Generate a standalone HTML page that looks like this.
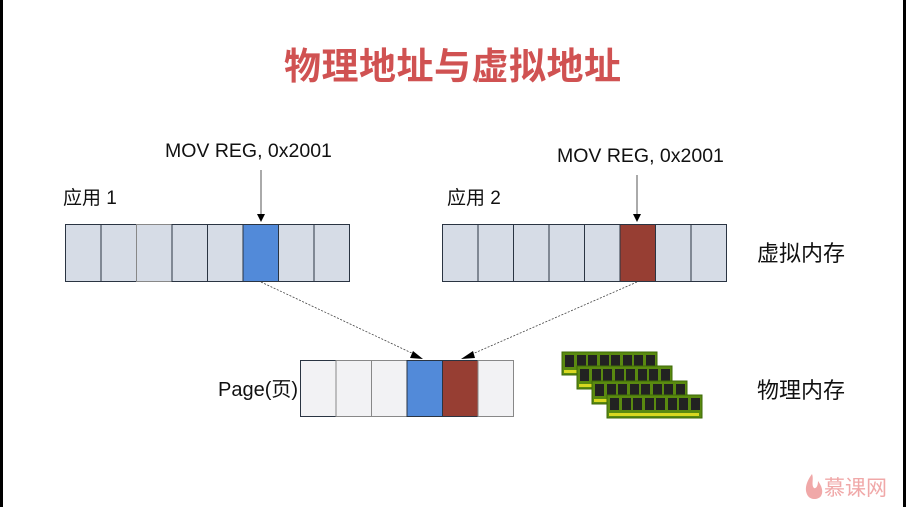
<!DOCTYPE html>
<html><head><meta charset="utf-8"><style>
html,body{margin:0;padding:0;background:#fff;width:906px;height:507px;overflow:hidden;position:relative;font-family:"Liberation Sans","Noto Sans CJK SC",sans-serif}
.t{position:absolute;white-space:nowrap;color:#111}
</style></head><body>
<div style="position:absolute;left:0;top:0;width:3px;height:507px;background:#000"></div>
<div style="position:absolute;right:0;top:0;width:3px;height:507px;background:#000"></div>
<div class="t" style="left:284px;top:36px;font-size:37px;font-weight:bold;color:#d05252;letter-spacing:0.5px;font-family:'Noto Sans CJK SC',sans-serif">物理地址与虚拟地址</div>
<div class="t" style="left:165px;top:140px;font-size:19.5px">MOV REG, 0x2001</div>
<div class="t" style="left:557px;top:145px;font-size:19.5px">MOV REG, 0x2001</div>
<div class="t" style="left:63px;top:183px;font-size:19px">应用 1</div>
<div class="t" style="left:447px;top:183px;font-size:19px">应用 2</div>
<div class="t" style="left:757px;top:236px;font-size:22px">虚拟内存</div>
<div class="t" style="left:757px;top:373px;font-size:22px">物理内存</div>
<div class="t" style="left:218px;top:373px;font-size:20px">Page(页)</div>
<div class="t" style="left:824px;top:472px;font-size:21px;color:#f0a8a8">慕课网</div>
<svg width="906" height="507" style="position:absolute;left:0;top:0" xmlns="http://www.w3.org/2000/svg">
<g stroke="#2a3442" stroke-width="1">
<rect x="65.5" y="224.5" width="35.5" height="57" fill="#d6dce6"/><rect x="101" y="224.5" width="35.5" height="57" fill="#d6dce6"/><rect x="136.5" y="224.5" width="35.5" height="57" fill="#d6dce6" stroke="#888"/><rect x="172" y="224.5" width="35.5" height="57" fill="#d6dce6"/><rect x="207.5" y="224.5" width="35.5" height="57" fill="#d6dce6"/><rect x="243" y="224.5" width="35.5" height="57" fill="#528ad9"/><rect x="278.5" y="224.5" width="35.5" height="57" fill="#d6dce6"/><rect x="314" y="224.5" width="35.5" height="57" fill="#d6dce6"/>
<rect x="442.5" y="224.5" width="35.5" height="57" fill="#d6dce6"/><rect x="478" y="224.5" width="35.5" height="57" fill="#d6dce6"/><rect x="513.5" y="224.5" width="35.5" height="57" fill="#d6dce6"/><rect x="549" y="224.5" width="35.5" height="57" fill="#d6dce6"/><rect x="584.5" y="224.5" width="35.5" height="57" fill="#d6dce6"/><rect x="620" y="224.5" width="35.5" height="57" fill="#973e33"/><rect x="655.5" y="224.5" width="35.5" height="57" fill="#d6dce6"/><rect x="691" y="224.5" width="35.5" height="57" fill="#d6dce6"/>
<rect x="300.5" y="360.5" width="35.5" height="56" fill="#f2f2f4"/><rect x="336" y="360.5" width="35.5" height="56" fill="#f2f2f4" stroke="#888"/><rect x="371.5" y="360.5" width="35.5" height="56" fill="#f2f2f4" stroke="#888"/><rect x="407" y="360.5" width="35.5" height="56" fill="#528ad9"/><rect x="442.5" y="360.5" width="35.5" height="56" fill="#973e33"/><rect x="478" y="360.5" width="35.5" height="56" fill="#f2f2f4" stroke="#888"/>
</g>
<line x1="261" y1="170" x2="261" y2="214" stroke="#555"/><path d="M257,214 L265,214 L261,222 z" fill="#000"/>
<line x1="637" y1="175" x2="637" y2="214" stroke="#555"/><path d="M633,214 L641,214 L637,222 z" fill="#000"/>
<line x1="261" y1="282" x2="416" y2="355" stroke="#444" stroke-dasharray="2,1.5" stroke-width="0.8"/><path d="M413,351 L423,359 L410,358 z" fill="#000"/>
<line x1="637" y1="282" x2="470" y2="355" stroke="#444" stroke-dasharray="2,1.5" stroke-width="0.8"/><path d="M473,351 L461,359 L475,358 z" fill="#000"/>
<g id="ram">
<rect x="562" y="352" width="95" height="23" fill="#5a8a10" stroke="#3d6a08"/>
<g fill="#222"><rect x="565" y="355" width="9" height="12"/><rect x="577" y="355" width="9" height="12"/><rect x="588" y="355" width="9" height="12"/><rect x="600" y="355" width="9" height="12"/><rect x="611" y="355" width="9" height="12"/><rect x="623" y="355" width="9" height="12"/><rect x="634" y="355" width="9" height="12"/><rect x="646" y="355" width="9" height="12"/></g>
<rect x="564" y="370" width="90" height="3" fill="#d8d820"/>
</g>
<use href="#ram" x="15" y="14"/><use href="#ram" x="30" y="29"/><use href="#ram" x="45" y="43"/>
<path d="M812,474 C806,482 804,490 808,496 C811,500 818,500 821,496 C824,491 821,485 818,481 C818,486 816,489 814,488 C811,485 814,479 812,474 z" fill="#f0a8a8"/>
</svg>
</body></html>
